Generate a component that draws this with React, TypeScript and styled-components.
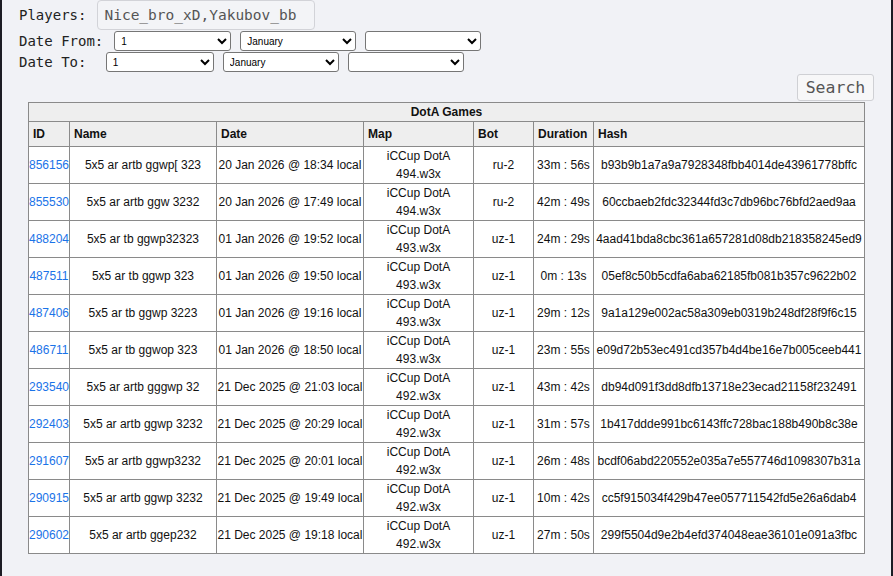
import React from "react";
import styled, { createGlobalStyle } from "styled-components";

const Global = createGlobalStyle`
  html, body { margin: 0; padding: 0; height: 100%; }
  body {
    background: #f1f2f6;
    border-left: 2px solid #1c1c24;
    border-right: 2px solid #1c1c24;
    box-sizing: border-box;
    min-height: 100vh;
  }
`;

const Page = styled.div`
  padding: 0 17px;
  font-family: "DejaVu Sans Mono", "Liberation Mono", monospace;
  color: #222;
`;

const FormRow = styled.div<{ $h: number; $mb: number }>`
  display: flex;
  align-items: center;
  height: ${(p) => p.$h}px;
  margin-bottom: ${(p) => p.$mb}px;
`;

const Label = styled.span`
  font-size: 14px;
  white-space: pre;
  margin-right: 11px;
  color: #222;
`;

const TextInput = styled.div`
  box-sizing: border-box;
  width: 218px;
  height: 30px;
  border: 1px solid #d2d3d8;
  border-radius: 4px;
  padding: 0 6px;
  display: flex;
  align-items: center;
  font-size: 14.5px;
  color: #555;
  background: #f3f4f7;
`;

const Select = styled.select<{ $w: number }>`
  box-sizing: border-box;
  width: ${(p) => p.$w}px;
  height: 20px;
  margin-right: 9px;
  border: 1px solid #767676;
  border-radius: 3px;
  background: #fff;
  font-family: "Liberation Sans", Arial, sans-serif;
  font-size: 10px;
  color: #000;
  padding: 0 2px;
`;

const SearchRow = styled.div`
  display: flex;
  justify-content: flex-end;
  height: 28px;
  align-items: flex-start;
`;

const SearchButton = styled.button`
  box-sizing: border-box;
  width: 77px;
  height: 27px;
  border: 1px solid #cfd0d4;
  border-radius: 3px;
  background: #f7f7f8;
  color: #555;
  font-family: "DejaVu Sans Mono", "Liberation Mono", monospace;
  font-size: 16.5px;
  padding: 0;
`;

const Table = styled.table`
  width: 836px;
  margin: 0 auto;
  border-collapse: collapse;
  table-layout: fixed;
  font-family: "Liberation Sans", Arial, sans-serif;
  font-size: 12px;
  color: #111;
  background: #fff;
  border: 1px solid #8a8a8a;
`;

const TitleCell = styled.th`
  background: #eeeeee;
  border: 1px solid #8a8a8a;
  height: 18px;
  padding: 0;
  font-weight: bold;
  text-align: center;
`;

const HeadCell = styled.th`
  background: #eeeeee;
  border: 1px solid #8a8a8a;
  height: 24px;
  padding: 0 0 0 4px;
  font-weight: bold;
  text-align: left;
`;

const Cell = styled.td`
  border: 1px solid #8a8a8a;
  padding: 0;
  line-height: 18px;
  height: 36px;
  text-align: center;
  white-space: nowrap;
  overflow: hidden;
`;

const IdLink = styled.a`
  color: #1a73e8;
  text-decoration: none;
`;

type Game = {
  id: string;
  name: string;
  date: string;
  map: string;
  bot: string;
  dur: string;
  hash: string;
};

const games: Game[] = [
  { id: "856156", name: "5x5 ar artb ggwp[ 323", date: "20 Jan 2026 @ 18:34 local", map: "494", bot: "ru-2", dur: "33m : 56s", hash: "b93b9b1a7a9a7928348fbb4014de43961778bffc" },
  { id: "855530", name: "5x5 ar artb ggw 3232", date: "20 Jan 2026 @ 17:49 local", map: "494", bot: "ru-2", dur: "42m : 49s", hash: "60ccbaeb2fdc32344fd3c7db96bc76bfd2aed9aa" },
  { id: "488204", name: "5x5 ar tb ggwp32323", date: "01 Jan 2026 @ 19:52 local", map: "493", bot: "uz-1", dur: "24m : 29s", hash: "4aad41bda8cbc361a657281d08db218358245ed9" },
  { id: "487511", name: "5x5 ar tb ggwp 323", date: "01 Jan 2026 @ 19:50 local", map: "493", bot: "uz-1", dur: "0m : 13s", hash: "05ef8c50b5cdfa6aba62185fb081b357c9622b02" },
  { id: "487406", name: "5x5 ar tb ggwp 3223", date: "01 Jan 2026 @ 19:16 local", map: "493", bot: "uz-1", dur: "29m : 12s", hash: "9a1a129e002ac58a309eb0319b248df28f9f6c15" },
  { id: "486711", name: "5x5 ar tb ggwop 323", date: "01 Jan 2026 @ 18:50 local", map: "493", bot: "uz-1", dur: "23m : 55s", hash: "e09d72b53ec491cd357b4d4be16e7b005ceeb441" },
  { id: "293540", name: "5x5 ar artb gggwp 32", date: "21 Dec 2025 @ 21:03 local", map: "492", bot: "uz-1", dur: "43m : 42s", hash: "db94d091f3dd8dfb13718e23ecad21158f232491" },
  { id: "292403", name: "5x5 ar artb ggwp 3232", date: "21 Dec 2025 @ 20:29 local", map: "492", bot: "uz-1", dur: "31m : 57s", hash: "1b417ddde991bc6143ffc728bac188b490b8c38e" },
  { id: "291607", name: "5x5 ar artb ggwp3232", date: "21 Dec 2025 @ 20:01 local", map: "492", bot: "uz-1", dur: "26m : 48s", hash: "bcdf06abd220552e035a7e557746d1098307b31a" },
  { id: "290915", name: "5x5 ar artb ggwp 3232", date: "21 Dec 2025 @ 19:49 local", map: "492", bot: "uz-1", dur: "10m : 42s", hash: "cc5f915034f429b47ee057711542fd5e26a6dab4" },
  { id: "290602", name: "5x5 ar artb ggep232", date: "21 Dec 2025 @ 19:18 local", map: "492", bot: "uz-1", dur: "27m : 50s", hash: "299f5504d9e2b4efd374048eae36101e091a3fbc" },
];

const months = ["January", "February", "March", "April", "May", "June", "July", "August", "September", "October", "November", "December"];
const days = Array.from({ length: 31 }, (_, i) => String(i + 1));

const DateSelects: React.FC<{ first: number }> = ({ first }) => (
  <>
    <Select $w={first} defaultValue="1">
      {days.map((d) => (
        <option key={d}>{d}</option>
      ))}
    </Select>
    <Select $w={116} defaultValue="January">
      {months.map((m) => (
        <option key={m}>{m}</option>
      ))}
    </Select>
    <Select $w={116} defaultValue="">
      <option value=""></option>
      <option>2025</option>
      <option>2026</option>
    </Select>
  </>
);

export default function App() {
  return (
    <>
      <Global />
      <Page>
        <FormRow $h={30} $mb={1}>
          <Label>Players:</Label>
          <TextInput>Nice_bro_xD,Yakubov_bb</TextInput>
        </FormRow>
        <FormRow $h={20} $mb={1}>
          <Label>Date From:</Label>
          <DateSelects first={117} />
        </FormRow>
        <FormRow $h={20} $mb={2}>
          <Label>{"Date To: "}</Label>
          <DateSelects first={108} />
        </FormRow>
        <SearchRow>
          <SearchButton>Search</SearchButton>
        </SearchRow>
        <Table>
          <colgroup>
            <col style={{ width: 41 }} />
            <col style={{ width: 147 }} />
            <col style={{ width: 147 }} />
            <col style={{ width: 110 }} />
            <col style={{ width: 60 }} />
            <col style={{ width: 60 }} />
            <col style={{ width: 271 }} />
          </colgroup>
          <thead>
            <tr>
              <TitleCell colSpan={7}>DotA Games</TitleCell>
            </tr>
            <tr>
              <HeadCell>ID</HeadCell>
              <HeadCell>Name</HeadCell>
              <HeadCell>Date</HeadCell>
              <HeadCell>Map</HeadCell>
              <HeadCell>Bot</HeadCell>
              <HeadCell>Duration</HeadCell>
              <HeadCell>Hash</HeadCell>
            </tr>
          </thead>
          <tbody>
            {games.map((g) => (
              <tr key={g.id}>
                <Cell>
                  <IdLink href="#">{g.id}</IdLink>
                </Cell>
                <Cell>{g.name}</Cell>
                <Cell>{g.date}</Cell>
                <Cell>
                  iCCup DotA
                  <br />
                  {g.map}.w3x
                </Cell>
                <Cell>{g.bot}</Cell>
                <Cell>{g.dur}</Cell>
                <Cell>{g.hash}</Cell>
              </tr>
            ))}
          </tbody>
        </Table>
      </Page>
    </>
  );
}
